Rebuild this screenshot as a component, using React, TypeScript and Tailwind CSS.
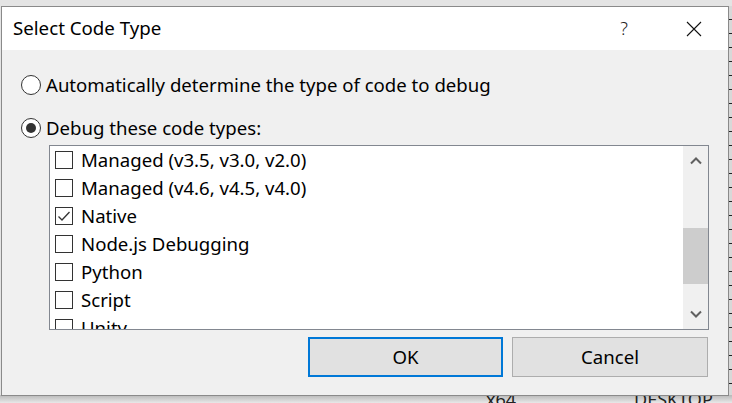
import { useState } from 'react'

const codeTypes = [
  { label: 'Managed (v3.5, v3.0, v2.0)', checked: false },
  { label: 'Managed (v4.6, v4.5, v4.0)', checked: false },
  { label: 'Native', checked: true },
  { label: 'Node.js Debugging', checked: false },
  { label: 'Python', checked: false },
  { label: 'Script', checked: false },
  { label: 'Unity', checked: false },
]

function Radio({ selected }: { selected: boolean }) {
  return (
    <span className="flex h-[20px] w-[20px] shrink-0 items-center justify-center rounded-full border border-[#333333] bg-white">
      {selected && <span className="h-[10px] w-[10px] rounded-full bg-[#333333]" />}
    </span>
  )
}

function CheckBox({ checked }: { checked: boolean }) {
  return (
    <span className="flex h-[18px] w-[18px] shrink-0 items-center justify-center border border-[#333333] bg-white">
      {checked && (
        <svg width="14" height="14" viewBox="0 0 14 14" fill="none">
          <path d="M1.5 7.5 L5 11 L12.5 3" stroke="#333333" strokeWidth="1.3" />
        </svg>
      )}
    </span>
  )
}

export default function App() {
  const [mode, setMode] = useState<'auto' | 'manual'>('manual')
  const [items, setItems] = useState(codeTypes)

  const toggle = (i: number) =>
    setItems(items.map((it, j) => (j === i ? { ...it, checked: !it.checked } : it)))

  return (
    <div className="relative h-[403px] w-[732px] overflow-hidden bg-[#e4e4e4] pl-[1px] pt-[6px] font-['Noto_Sans',sans-serif] text-black">
      {/* bits of the window behind the dialog */}
      <div className="absolute right-0 top-[6px] h-[397px] w-[3px] bg-[repeating-linear-gradient(to_bottom,#d8d8d8_0px,#d8d8d8_13px,#222222_13px,#222222_14px)]" />
      <div className="absolute bottom-0 left-0 h-[8px] w-[732px] bg-gradient-to-b from-[#b8b8b8] to-[#e8e8e8]" />
      <span className="absolute left-[486px] top-[390px] text-[18px] leading-none text-[#222]">x64</span>
      <span className="absolute left-[634px] top-[390px] text-[18px] leading-none text-[#222]">DESKTOP</span>

      <div className="relative z-10 flex h-[390px] w-[728px] flex-col border border-[#8a8a8a] bg-[#f0f0f0]">
        <div className="flex h-[43px] shrink-0 items-center bg-white pl-[11px]">
          <span className="flex-1 text-[18.7px]">Select Code Type</span>
          <span className="mr-[58px] text-[18px] font-light text-[#222]">?</span>
          <svg className="mr-[26px]" width="16" height="16" viewBox="0 0 16 16">
            <path d="M1 1 L15 15 M15 1 L1 15" stroke="#111111" strokeWidth="1.1" />
          </svg>
        </div>

        <div className="flex flex-1 flex-col pl-[19px] pr-[20px] text-[18.6px]">
          <label className="mt-[21px] flex h-[28px] items-center gap-[5px]" onClick={() => setMode('auto')}>
            <Radio selected={mode === 'auto'} />
            <span>Automatically determine the type of code to debug</span>
          </label>
          <label className="mt-[15px] flex h-[28px] items-center gap-[5px]" onClick={() => setMode('manual')}>
            <Radio selected={mode === 'manual'} />
            <span>Debug these code types:</span>
          </label>

          <div className="ml-[28px] mt-[3px] flex h-[185px] w-[660px] border border-[#828790] bg-white">
            <div className="flex-1 overflow-hidden">
              {items.map((it, i) => (
                <div key={it.label} className="flex h-[28px] items-center gap-[8px] pl-[5px]" onClick={() => toggle(i)}>
                  <CheckBox checked={it.checked} />
                  <span>{it.label}</span>
                </div>
              ))}
            </div>
            <div className="flex w-[25px] flex-col bg-[#f0f0f0]">
              <div className="flex h-[30px] items-center justify-center">
                <svg width="12" height="8" viewBox="0 0 12 8">
                  <path d="M1 6.5 L6 1.5 L11 6.5" stroke="#606060" strokeWidth="2" fill="none" />
                </svg>
              </div>
              <div className="flex-1">
                <div className="mt-[52px] h-[56px] bg-[#cdcdcd]" />
              </div>
              <div className="flex h-[30px] items-center justify-center">
                <svg width="12" height="8" viewBox="0 0 12 8">
                  <path d="M1 1.5 L6 6.5 L11 1.5" stroke="#606060" strokeWidth="2" fill="none" />
                </svg>
              </div>
            </div>
          </div>

          <div className="mt-[7px] flex justify-end gap-[9px]">
            <button className="h-[40px] w-[195px] border-2 border-[#0078d7] bg-[#e1e1e1] text-[18.6px]">OK</button>
            <button className="h-[40px] w-[196px] border border-[#adadad] bg-[#e1e1e1] text-[18.6px]">Cancel</button>
          </div>
        </div>
      </div>
    </div>
  )
}
